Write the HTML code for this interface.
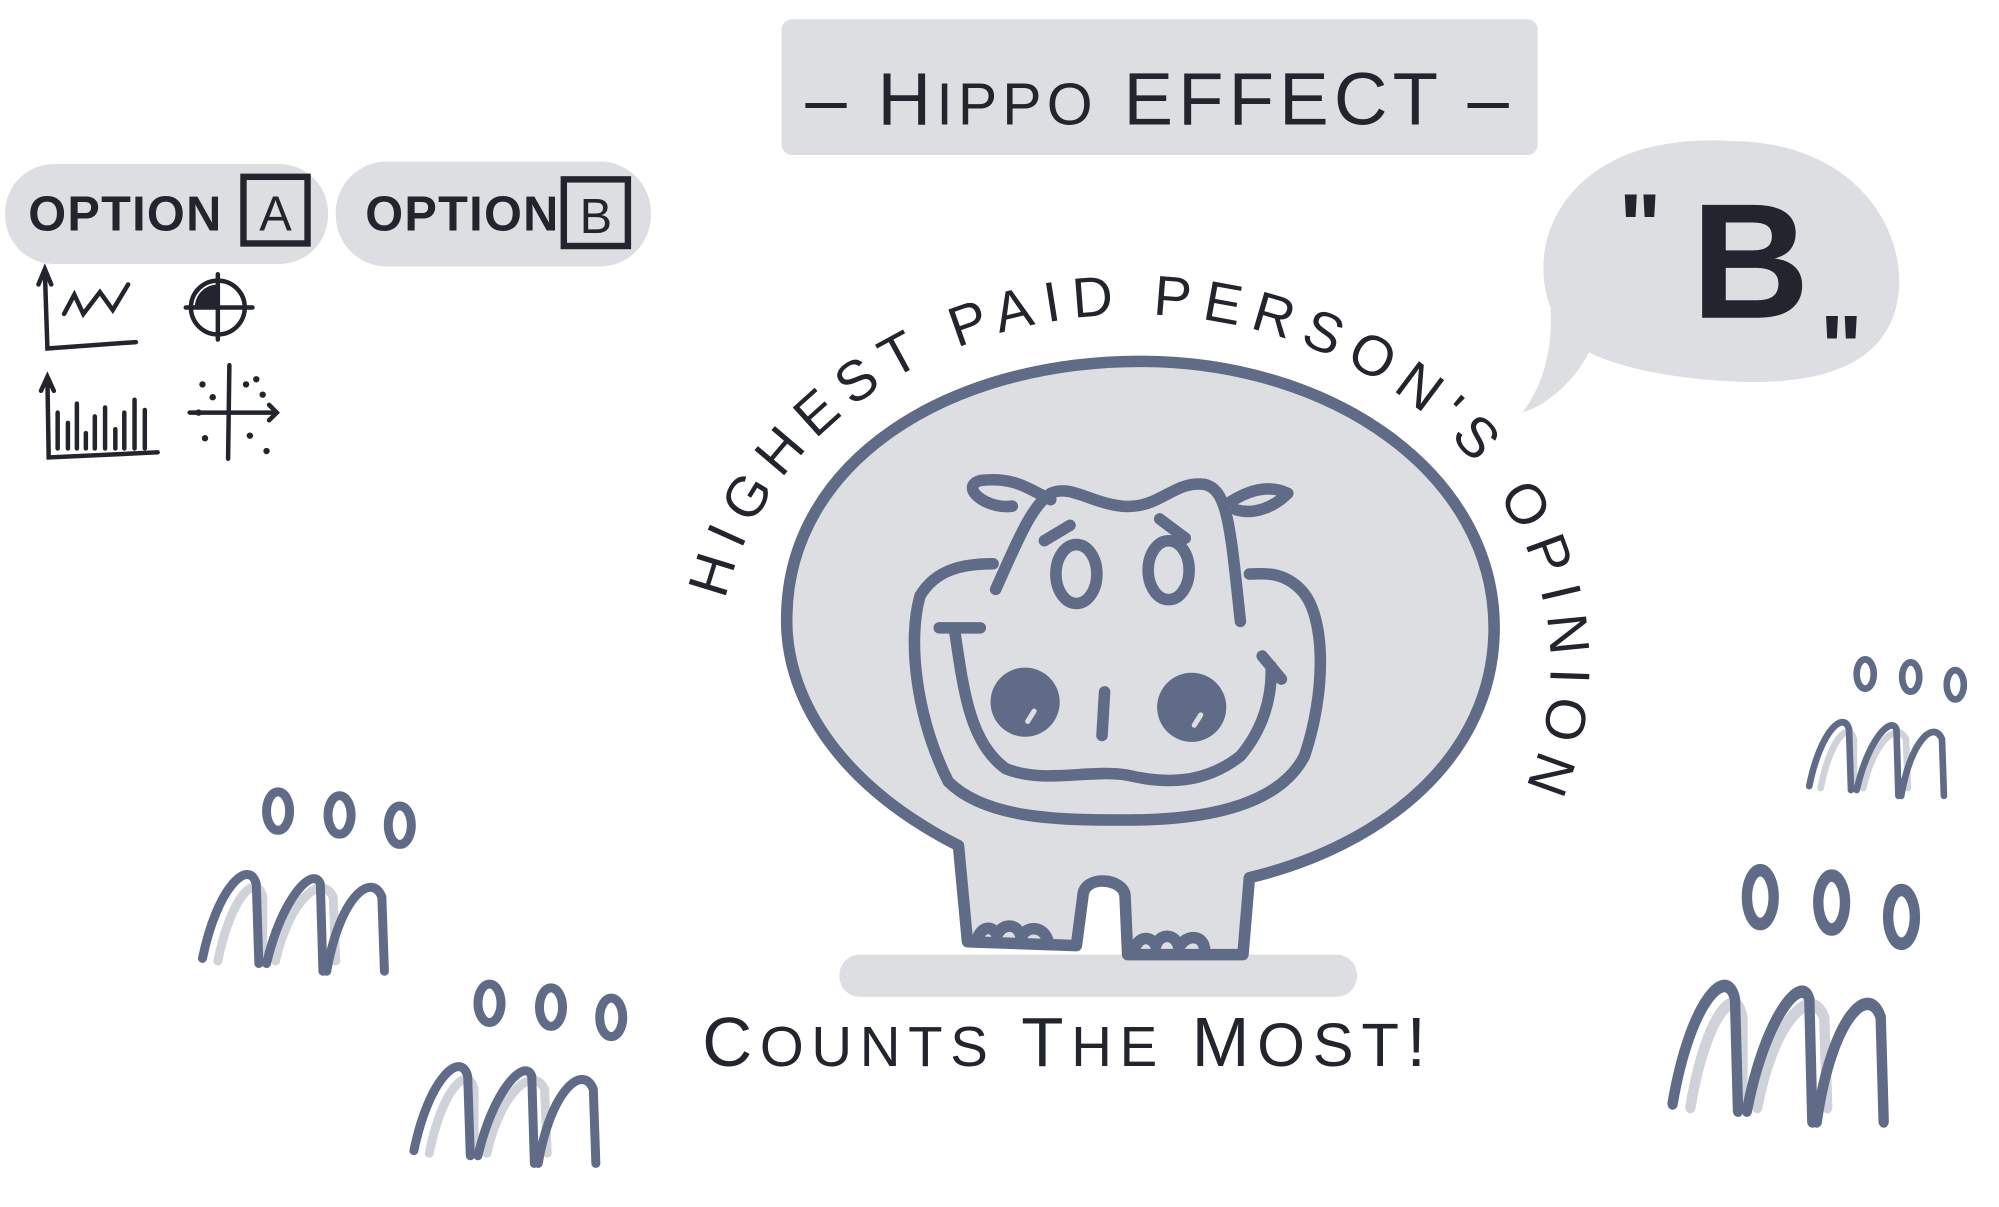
<!DOCTYPE html>
<html><head><meta charset="utf-8"><style>
html,body{margin:0;padding:0;background:#fff;}
svg{display:block}
text{font-family:"Liberation Sans",sans-serif;fill:#22252e}
</style></head><body>
<svg width="1999" height="1207" viewBox="0 0 1560 942" preserveAspectRatio="none" xmlns="http://www.w3.org/2000/svg">
<!-- title -->
<rect x="610" y="15" width="590" height="106" rx="8" fill="#dcdee1"/>
<text x="905" y="97" font-size="58" text-anchor="middle" letter-spacing="4">– H<tspan font-size="46">IPPO</tspan> EFFECT –</text>

<!-- options -->
<rect x="4" y="128" width="252" height="78" rx="38" fill="#dcdee1"/>
<rect x="262" y="126" width="246" height="82" rx="40" fill="#dcdee1"/>
<text x="22" y="180" font-size="38" font-weight="bold" letter-spacing="1">OPTION</text>
<rect x="190" y="138" width="50" height="52" fill="none" stroke="#22252e" stroke-width="5"/>
<text x="215" y="180" font-size="38" text-anchor="middle">A</text>
<text x="285" y="180" font-size="38" font-weight="bold" letter-spacing="1">OPTION</text>
<rect x="440" y="140" width="50" height="52" fill="none" stroke="#22252e" stroke-width="5"/>
<text x="465" y="182" font-size="38" text-anchor="middle">B</text>

<!-- chart icons -->
<g fill="none" stroke="#22252e" stroke-width="3.5" stroke-linecap="round">
<path d="M35 212 L37 272 L106 267 M30 222 L35 210 L40 222"/>
<path d="M50 245 L58 230 L65 245 L78 228 L88 242 L100 222"/>
<circle cx="170" cy="240" r="21"/><path d="M170 214 V265 M145 240 H197"/>
<path d="M37 296 L38 357 L123 353 M32 305 L37 294 L42 305"/>
<path d="M45 350 V322 M53 350 V330 M60 350 V315 M67 350 V338 M74 350 V325 M82 350 V318 M90 350 V335 M97 350 V322 M105 350 V312 M113 350 V320"/>
<path d="M179 285 L178 358 M148 322 H215 M210 316 l6 6 -6 6"/>
</g>
<path d="M152 240 A18 18 0 0 1 170 222 L170 240 Z" fill="#22252e"/>
<g fill="#22252e"><circle cx="158" cy="300" r="2.5"/><circle cx="166" cy="310" r="2.5"/><circle cx="192" cy="300" r="2.5"/><circle cx="205" cy="308" r="2.5"/><circle cx="160" cy="342" r="2.5"/><circle cx="195" cy="340" r="2.5"/><circle cx="208" cy="352" r="2.5"/><circle cx="155" cy="322" r="2.5"/><circle cx="200" cy="296" r="2.5"/></g>

<!-- speech bubble -->
<path d="M1350 110 C1440 110 1485 170 1482 225 C1478 280 1430 300 1360 298 C1300 296 1260 285 1240 275 C1230 295 1210 315 1188 322 C1205 300 1212 270 1210 240 C1195 200 1210 150 1260 125 C1285 112 1320 108 1350 110 Z" fill="#dcdee1"/>
<text x="1366" y="248" font-size="128" font-weight="bold" text-anchor="middle">B</text>
<text x="1280" y="200" font-size="70" font-weight="bold" text-anchor="middle">"</text>
<text x="1437" y="295" font-size="70" font-weight="bold" text-anchor="middle">"</text>

<!-- ground -->
<rect x="655" y="745" width="404" height="33" rx="16" fill="#dcdee1"/>

<!-- hippo body -->
<g stroke="#5f6b87" stroke-width="9" stroke-linecap="round" stroke-linejoin="round">
<path d="M748 660 C650 610 612 540 614 480 C616 360 740 282 890 282 C1040 282 1166 370 1166 490 C1166 590 1080 660 975 685 L970 745 L880 745 L878 700 C878 685 845 682 845 700 L840 738 L755 735 Z" fill="#dcdee1"/>
<g fill="none">
<path d="M777 460 C795 420 805 395 820 385 C835 378 850 392 875 395 C905 398 915 375 940 378 C958 382 960 410 968 485"/>
<path d="M820 390 C800 380 790 372 765 375 C748 380 770 398 790 395"/>
<path d="M958 393 C975 382 990 378 1005 385 C995 395 980 402 965 398"/>
<path d="M775 440 C750 440 730 445 718 465 C708 500 715 560 740 610 C770 640 830 640 880 640 C950 640 1000 625 1018 590 C1035 540 1035 480 1015 460 C1000 445 985 448 975 448"/>
<path d="M733 490 H765 M745 492 C752 540 757 580 785 600 C815 612 850 600 880 605 C910 612 940 612 968 590 C985 570 993 545 992 520 M985 512 L1000 530"/>
<path d="M862 540 L860 574"/>
<path d="M815 422 L835 410 M905 405 L925 420"/>
<path d="M762 735 C765 722 775 722 778 730 C782 720 795 720 797 732 C800 722 815 722 818 735"/>
<path d="M885 742 C888 730 898 730 902 738 C905 728 918 728 920 740 C924 730 938 728 940 740"/>
</g>
<ellipse cx="840" cy="448" rx="16" ry="23" fill="none"/>
<ellipse cx="912" cy="445" rx="16" ry="23" fill="none"/>
</g>
<g fill="#5f6b87"><circle cx="800" cy="548" r="27"/><circle cx="930" cy="552" r="27"/></g>
<g stroke="#dcdee1" stroke-width="4" stroke-linecap="round"><path d="M807 555 L802 563 M937 558 L932 566"/></g>

<!-- curved text -->
<defs><path id="arc" d="M566 468 A325 275 0 1 1 1188 620"/></defs>
<text font-size="44" letter-spacing="3"><textPath href="#arc" textLength="990" lengthAdjust="spacing">HIGHEST  PAID  PERSON'S OPINION</textPath></text>

<text x="548" y="832" font-size="54" letter-spacing="6">C<tspan font-size="44">OUNTS</tspan>  T<tspan font-size="44">HE</tspan>  M<tspan font-size="48">OST</tspan>!</text>

<!-- people -->
<g fill="none" stroke-linecap="round">
<g id="pp">
<g stroke="#cfd2d8" stroke-width="7"><path d="M170 750 C180 700 200 680 205 700 L205 750 M215 750 C225 705 250 680 260 700 L262 750"/></g>
<g stroke="#5f6b87" stroke-width="7">
<path d="M158 748 C170 690 195 670 200 690 L202 752 M208 752 C220 700 245 675 250 690 L252 758 M255 758 C265 700 290 680 298 700 L300 758"/>
<ellipse cx="217" cy="633" rx="9" ry="15"/><ellipse cx="265" cy="636" rx="9" ry="15"/><ellipse cx="312" cy="644" rx="9" ry="15"/>
</g></g>
<use href="#pp" transform="translate(165 150)"/>
<use href="#pp" transform="translate(1122 -186) scale(1.16 1.4)"/>
<use href="#pp" transform="translate(1295 45) scale(0.74 0.76)"/>
</g>
</svg>
</body></html>
